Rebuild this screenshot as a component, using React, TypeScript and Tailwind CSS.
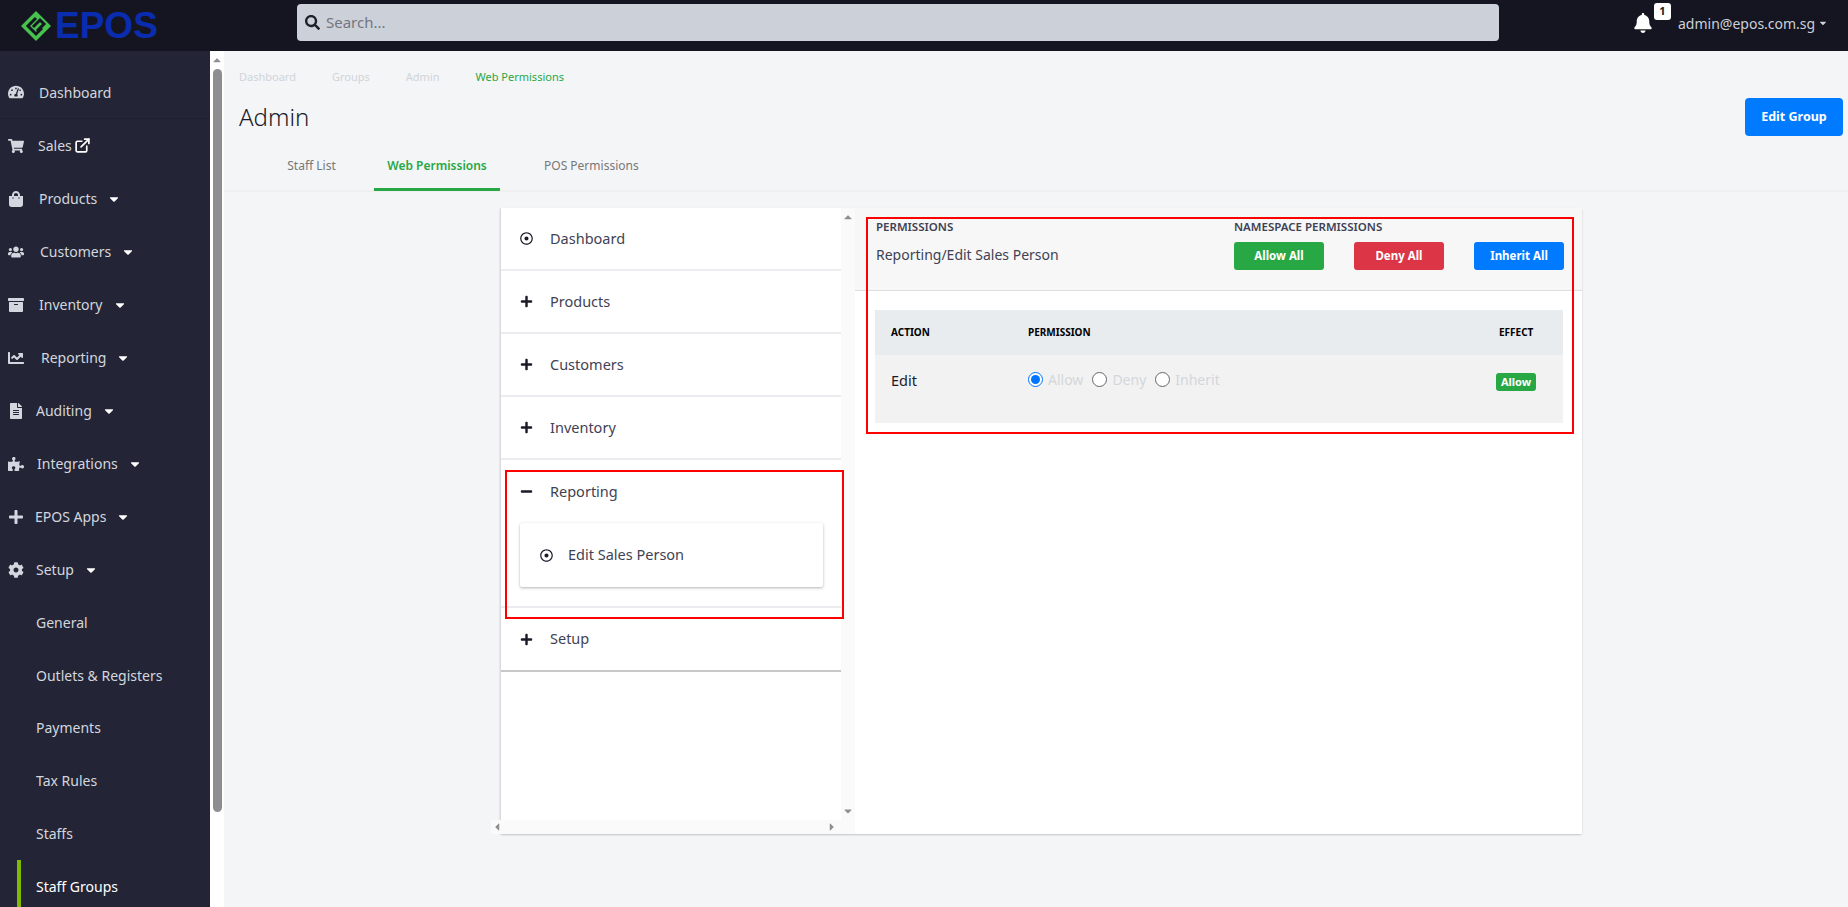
import type { ComponentType } from "react";
import {
  FaArchive,
  FaBell,
  FaCaretDown,
  FaCaretLeft,
  FaCaretRight,
  FaCaretUp,
  FaChartLine,
  FaCog,
  FaFileAlt,
  FaMinus,
  FaPlus,
  FaPuzzlePiece,
  FaRegDotCircle,
  FaSearch,
  FaShoppingBag,
  FaShoppingCart,
  FaTachometerAlt,
  FaUsers,
} from "react-icons/fa";
import { ExternalLink } from "lucide-react";

type NavItem = {
  label: string;
  icon?: ComponentType<{ className?: string }>;
  gap: string;
  caret?: boolean;
};

const NAV: NavItem[] = [
  { label: "Dashboard", icon: FaTachometerAlt, gap: "w-[31px]" },
  { label: "Sales", icon: FaShoppingCart, gap: "w-[30px]" },
  { label: "Products", icon: FaShoppingBag, gap: "w-[31px]", caret: true },
  { label: "Customers", icon: FaUsers, gap: "w-[32px]", caret: true },
  { label: "Inventory", icon: FaArchive, gap: "w-[31px]", caret: true },
  { label: "Reporting", icon: FaChartLine, gap: "w-[33px]", caret: true },
  { label: "Auditing", icon: FaFileAlt, gap: "w-[28px]", caret: true },
  { label: "Integrations", icon: FaPuzzlePiece, gap: "w-[29px]", caret: true },
  { label: "EPOS Apps", icon: FaPlus, gap: "w-[27px]", caret: true },
  { label: "Setup", icon: FaCog, gap: "w-[28px]", caret: true },
];

const SUB_NAV = ["General", "Outlets & Registers", "Payments", "Tax Rules", "Staffs", "Staff Groups"];

function Logo() {
  return (
    <div className="flex w-[297px] items-center pl-[20px]">
      <svg viewBox="0 0 32 32" className="h-[32px] w-[32px]" fill="none">
        <path d="M16 1 L31 16 L16 31 L1 16 Z" fill="#46c24d" />
        <path d="M16 8 L8 16 L16 24 L22 18" stroke="#151521" strokeWidth="3" />
        <path d="M13 17 L20 10 L24 14 L17 21" stroke="#151521" strokeWidth="3" />
      </svg>
      <span className="ml-[3px] font-['Liberation_Sans',sans-serif] text-[37px] leading-none font-bold text-[#0a2cae]">
        EPOS
      </span>
    </div>
  );
}

function Header() {
  return (
    <header className="flex h-[51px] shrink-0 items-start bg-[#151521] pt-[4px]">
      <div className="-mt-[4px] flex h-[51px] items-center">
        <Logo />
      </div>
      <div className="flex h-[37px] w-[1202px] items-center rounded-[4px] bg-[#ccd0d8] pl-[8px]">
        <FaSearch className="h-[15px] w-[15px] text-[#1d2129]" />
        <span className="ml-[6px] text-[15px] text-[#73777f]">Search...</span>
      </div>
      <div className="ml-[134px] flex items-start">
        <FaBell className="mt-[9px] h-[20px] w-[20px] text-white" />
        <span className="-mt-[1px] ml-[1px] flex h-[17px] w-[17px] items-center justify-center rounded-[3px] bg-white text-[11px] font-bold text-[#222]">
          1
        </span>
        <span className="mt-[10px] ml-[7px] text-[14px] leading-[20px] text-[#ccd0d8]">admin@epos.com.sg</span>
        <FaCaretDown className="mt-[14px] ml-[3px] h-[10px] w-[10px] text-[#ccd0d8]" />
      </div>
    </header>
  );
}

function Sidebar() {
  return (
    <aside className="w-[210px] shrink-0 overflow-hidden bg-[#232536] pt-[15px] text-[14px] text-[#d3d6de]">
      {NAV.map((item, i) => {
        const Icon = item.icon!;
        return (
          <div
            key={item.label}
            className={`flex h-[53px] items-center pl-[8px] ${i === 0 ? "border-b border-[#1d1f2e]" : ""}`}
          >
            <Icon className="h-[16px] w-[16px] shrink-0" />
            <span className={item.gap.replace(/^$/, "")} />
            <span className="-ml-[16px]">{item.label}</span>
            {item.label === "Sales" && <ExternalLink className="ml-[2px] h-[17px] w-[17px] text-white" strokeWidth={2.4} />}
            {item.caret && <FaCaretDown className="ml-[10px] h-[14px] w-[14px] text-white" />}
          </div>
        );
      })}
      {SUB_NAV.map((label) => {
        const active = label === "Staff Groups";
        return (
          <div key={label} className={`flex h-[52.8px] items-center ${active ? "text-white" : ""}`}>
            <span className={`h-full w-[4px] ml-[17px] ${active ? "bg-[#7fba00]" : ""}`} />
            <span className="ml-[15px]">{label}</span>
          </div>
        );
      })}
    </aside>
  );
}

function PageScrollbar() {
  return (
    <div className="flex w-[14px] shrink-0 flex-col items-center bg-white">
      <FaCaretUp className="mt-[3px] h-[12px] w-[12px] text-[#8e8e8e]" />
      <div className="mt-[3px] h-[743px] w-[9px] rounded-[5px] bg-[#8e8e8e]" />
    </div>
  );
}

function TreeRow({ label, kind }: { label: string; kind: "dot" | "plus" | "minus" }) {
  const Icon = kind === "dot" ? FaRegDotCircle : kind === "plus" ? FaPlus : FaMinus;
  return (
    <div className={`flex items-center pl-[19px] ${kind === "minus" ? "h-[63px]" : "h-[63px] border-b-2 border-[#ebebf0]"}`}>
      <Icon className="h-[13px] w-[13px] text-[#1b1b28]" />
      <span className="ml-[17px] text-[14.5px] text-[#3f4254]">{label}</span>
    </div>
  );
}

function TreePanel() {
  return (
    <div className="relative w-[355px] shrink-0 border-l border-[#d9d9df] bg-white">
      <div className="w-[341px]">
        <TreeRow label="Dashboard" kind="dot" />
        <TreeRow label="Products" kind="plus" />
        <TreeRow label="Customers" kind="plus" />
        <TreeRow label="Inventory" kind="plus" />
        <TreeRow label="Reporting" kind="minus" />
        <div className="border-b-2 border-[#ebebf0] pb-[19px] pl-[19px]">
          <div className="flex h-[64px] w-[303px] items-center rounded-[2px] bg-white pl-[20px] shadow-[0_1px_3px_rgba(0,0,0,0.3)]">
            <FaRegDotCircle className="h-[13px] w-[13px] text-[#1b1b28]" />
            <span className="ml-[15px] text-[14.5px] text-[#3f4254]">Edit Sales Person</span>
          </div>
        </div>
        <div className="flex h-[64px] items-center border-b-2 border-[#c8c8c8] pl-[19px]">
          <FaPlus className="h-[13px] w-[13px] text-[#1b1b28]" />
          <span className="ml-[17px] text-[14.5px] text-[#3f4254]">Setup</span>
        </div>
      </div>
      <div className="absolute top-0 right-0 bottom-0 flex w-[14px] flex-col items-center justify-between bg-[#fafafa] py-[3px]">
        <FaCaretUp className="h-[12px] w-[12px] text-[#8e8e8e]" />
        <FaCaretDown className="mb-[14px] h-[12px] w-[12px] text-[#8e8e8e]" />
      </div>
      <div className="absolute right-[14px] bottom-0 -left-[10px] flex h-[14px] items-center justify-between bg-[#fafafa] pr-[3px]">
        <FaCaretLeft className="h-[12px] w-[12px] text-[#8e8e8e]" />
        <FaCaretRight className="h-[12px] w-[12px] text-[#8e8e8e]" />
      </div>
    </div>
  );
}

function Radio({ label, checked }: { label: string; checked?: boolean }) {
  return (
    <label className="flex items-center">
      <span
        className={`flex h-[15px] w-[15px] items-center justify-center rounded-full border bg-white ${
          checked ? "border-[#0075ff]" : "border-[#666]"
        }`}
      >
        {checked && <span className="h-[9px] w-[9px] rounded-full bg-[#0075ff]" />}
      </span>
      <span className="ml-[5px] text-[14px] text-[#d3d7dc]">{label}</span>
    </label>
  );
}

function ActionButton({ label, color }: { label: string; color: string }) {
  return (
    <button className={`h-[28px] w-[90px] rounded-[3px] text-[11.5px] font-bold text-white ${color}`}>{label}</button>
  );
}

function PermissionsPanel() {
  return (
    <div className="flex-1 bg-white">
      <div className="flex h-[83px] items-start border-b border-[#dedede] bg-[#f7f7f7] pt-[11px] pl-[21px]">
        <div className="w-[358px]">
          <div className="text-[11.5px] leading-[16px] font-semibold text-[#3f4254]">PERMISSIONS</div>
          <div className="mt-[10px] text-[14px] leading-[20px] text-[#3f4254]">Reporting/Edit Sales Person</div>
        </div>
        <div>
          <div className="text-[11.5px] leading-[16px] font-semibold text-[#3f4254]">NAMESPACE PERMISSIONS</div>
          <div className="mt-[7px] flex gap-[30px]">
            <ActionButton label="Allow All" color="bg-[#28a745]" />
            <ActionButton label="Deny All" color="bg-[#dc3545]" />
            <ActionButton label="Inherit All" color="bg-[#007bff]" />
          </div>
        </div>
      </div>
      <div className="mt-[19px] ml-[20px] w-[688px]">
        <div className="grid h-[45px] grid-cols-[137px_471px_1fr] items-center bg-[#e9ecef] pl-[16px] text-[10px] font-bold text-black">
          <span>ACTION</span>
          <span>PERMISSION</span>
          <span>EFFECT</span>
        </div>
        <div className="grid h-[68px] grid-cols-[137px_468px_1fr] bg-[#f2f2f2] pt-[14px] pl-[16px]">
          <span className="pt-[1px] text-[14.5px] leading-[20px] text-[#1b1b28]">Edit</span>
          <div className="flex h-[20px] gap-[9px]">
            <Radio label="Allow" checked />
            <Radio label="Deny" />
            <Radio label="Inherit" />
          </div>
          <div className="pt-[4px]">
            <span className="flex h-[18px] w-[40px] items-center justify-center rounded-[3px] bg-[#28a745] text-[11px] font-bold text-white">
              Allow
            </span>
          </div>
        </div>
      </div>
    </div>
  );
}

export default function App() {
  return (
    <div className="flex h-[907px] w-[1848px] flex-col overflow-hidden bg-[#f4f5f7] font-['Noto_Sans',sans-serif]">
      <Header />
      <div className="flex min-h-0 flex-1">
        <Sidebar />
        <PageScrollbar />
        <main className="min-w-0 flex-1">
          <div className="flex items-start justify-between pt-[18px] pr-[5px] pl-[15px]">
            <div>
              <div className="flex gap-[36px] text-[11px] leading-[16px] text-[#d0d4da]">
                <span>Dashboard</span>
                <span>Groups</span>
                <span>Admin</span>
                <span className="text-[#28a745]">Web Permissions</span>
              </div>
              <h1 className="mt-[17px] text-[24px] leading-[30px] font-light text-[#1b1b28]">Admin</h1>
            </div>
            <button className="mt-[29px] h-[38px] w-[98px] rounded-[4px] bg-[#007bff] text-[12.5px] font-bold text-white">
              Edit Group
            </button>
          </div>
          <div className="mt-[6px] flex h-[50px] items-center border-b-2 border-[#efefef] pl-[125px] text-[12px] text-[#777]">
            <span className="-ml-[100px] flex h-[50px] w-[125px] items-center justify-center">Staff List</span>
            <span className="flex h-[50px] w-[126px] items-center justify-center border-b-[3px] border-[#28a745] pt-[2px] font-semibold text-[#28a745]">
              Web Permissions
            </span>
            <span className="ml-[44px]">POS Permissions</span>
          </div>
          <div className="relative mt-[16px] ml-[276px] flex h-[626px] w-[1082px] rounded-[2px] shadow-[0_1px_2px_rgba(0,0,0,0.2)]">
            <TreePanel />
            <PermissionsPanel />
            <div className="absolute top-[262px] left-[5px] h-[149px] w-[339px] border-2 border-[#ff0000]" />
            <div className="absolute top-[9px] left-[366px] h-[217px] w-[708px] border-2 border-[#ff0000]" />
          </div>
        </main>
      </div>
    </div>
  );
}
